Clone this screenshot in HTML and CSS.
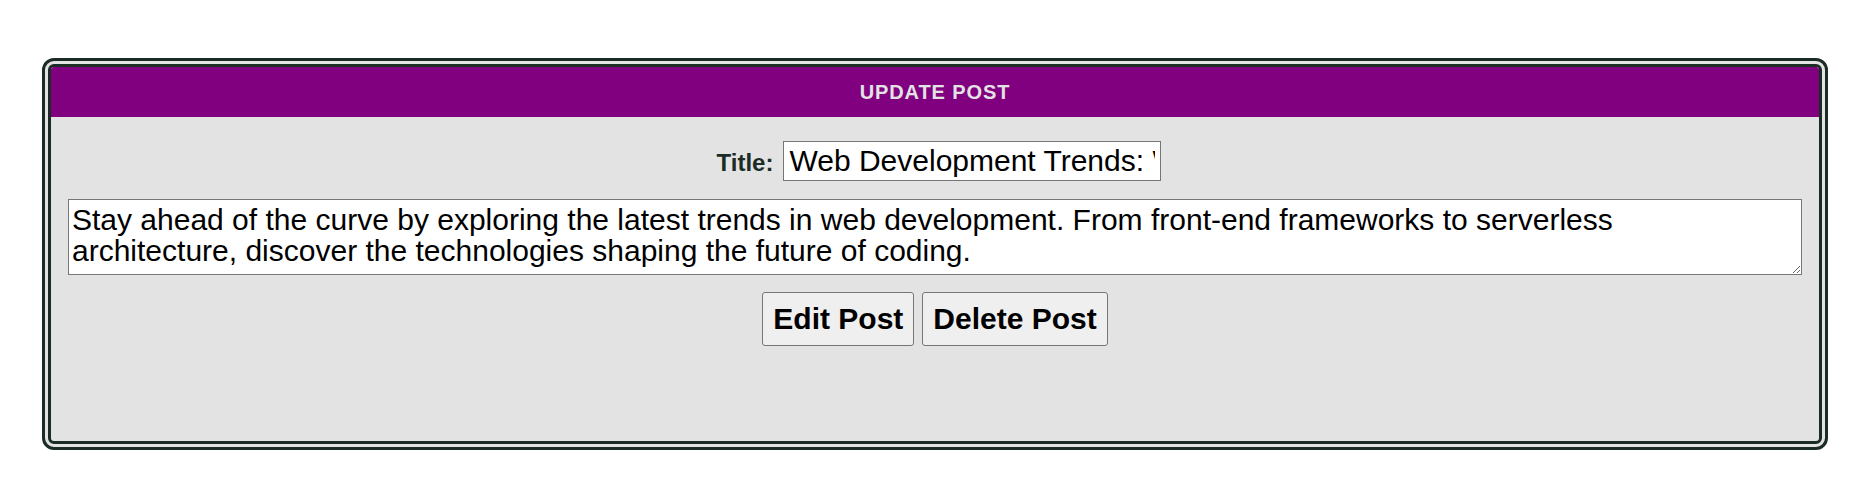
FILE: index.html
```html
<!DOCTYPE html>
<html lang="en">
<head>
<meta charset="utf-8">
<title>Update Post</title>
<link rel="stylesheet" href="styles.css">
</head>
<body>
<div class="card">
  <div class="card-header">UPDATE POST</div>
  <div class="card-body">
    <div class="title-row">
      <label class="title-label" for="title">Title:</label>
      <input class="title-input" id="title" type="text" value="Web Development Trends: What's Next?">
    </div>
    <textarea class="content-input">Stay ahead of the curve by exploring the latest trends in web development. From front-end frameworks to serverless architecture, discover the technologies shaping the future of coding.</textarea>
    <div class="actions">
      <button class="btn" type="button">Edit Post</button>
      <button class="btn" type="button">Delete Post</button>
    </div>
  </div>
</div>
</body>
</html>
```
FILE: styles.css
```css
html, body {
  margin: 0;
  padding: 0;
  background: #ffffff;
}

body {
  padding: 8px;
  font-family: "Liberation Sans", Arial, sans-serif;
}

.card {
  margin: 50px 0 0 34px;
  width: 1786px;
  height: 392px;
  box-sizing: border-box;
  border: 9px double #1b2b25;
  border-radius: 12px;
  background: #e3e3e3;
  overflow: hidden;
  color: #1b2b25;
}

.card-header {
  height: 50px;
  line-height: 50px;
  background: #800080;
  color: #e3e3e3;
  font-size: 20px;
  font-weight: bold;
  letter-spacing: 0.9px;
  text-align: center;
}

.card-body {
  display: flex;
  flex-direction: column;
  align-items: center;
  padding: 24px 17px 0;
}

.title-row {
  display: flex;
  align-items: baseline;
  gap: 10px;
  padding-left: 8px;
}

.title-label {
  font-size: 24px;
  font-weight: bold;
  color: #1b2b25;
}

.title-input {
  width: 378px;
  height: 40px;
  box-sizing: border-box;
  border: 1px solid #767676;
  padding: 1px 5px;
  margin: 0;
  font-family: "Liberation Sans", Arial, sans-serif;
  font-size: 30px;
  color: #000;
  background: #fff;
  outline: none;
}

.content-input {
  display: block;
  margin-top: 18px;
  width: 100%;
  height: 76px;
  box-sizing: border-box;
  border: 1px solid #767676;
  padding: 4px 60px 2px 3px;
  font-family: "Liberation Sans", Arial, sans-serif;
  font-size: 30px;
  line-height: 31px;
  color: #000;
  background: #fff;
  resize: both;
  outline: none;
}

.actions {
  display: flex;
  gap: 8px;
  margin-top: 17px;
}

.btn {
  height: 54px;
  box-sizing: border-box;
  padding: 0 10px;
  margin: 0;
  border: 1px solid #767676;
  border-radius: 3px;
  background: #efefef;
  color: #000;
  font-family: "Liberation Sans", Arial, sans-serif;
  font-size: 30px;
  font-weight: bold;
  cursor: pointer;
}
```
